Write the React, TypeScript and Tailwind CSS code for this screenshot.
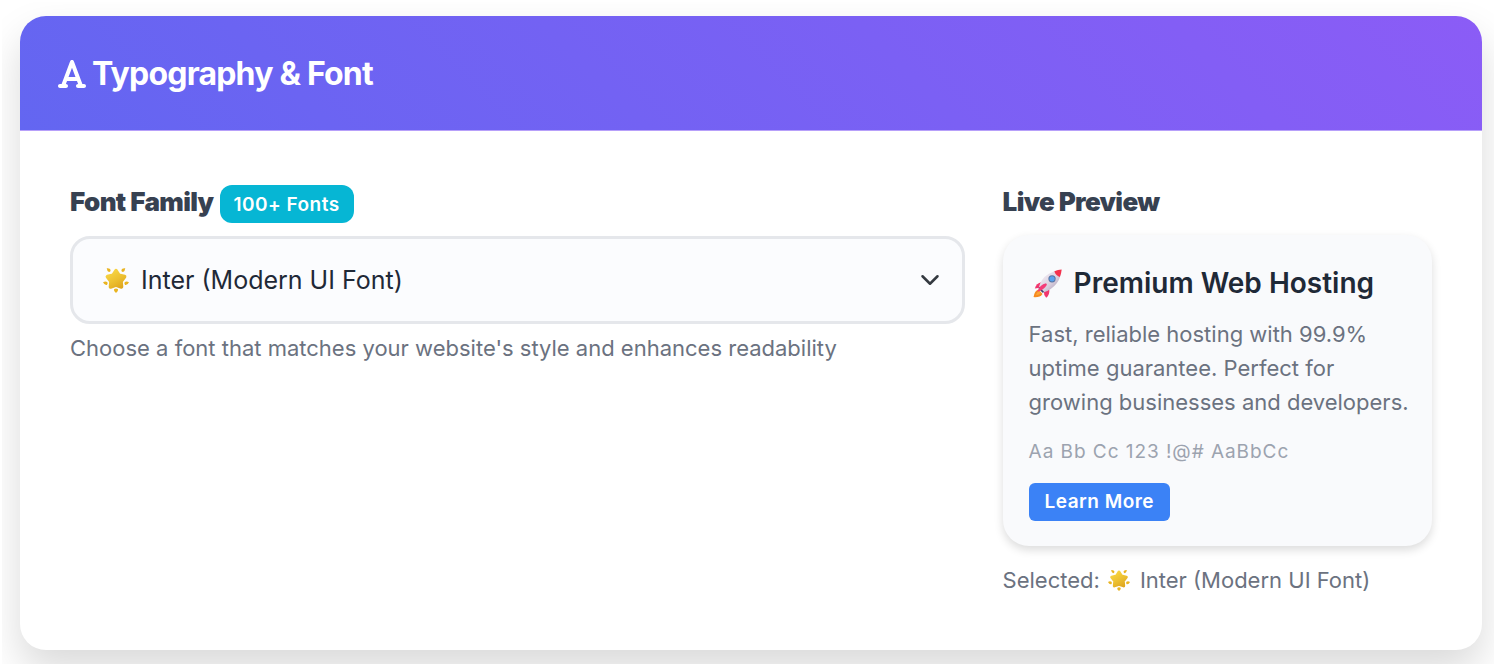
import { useState } from "react";
import { FaFont } from "react-icons/fa6";

const FONTS = ["Inter (Modern UI Font)", "Roboto (Clean Sans)", "Open Sans (Friendly)", "Lato (Humanist)"];

function Star({ className }: { className: string }) {
  return (
    <svg viewBox="0 0 32 32" className={className} aria-hidden="true">
      <defs>
        <linearGradient id="star" x1="0.2" y1="0" x2="0.8" y2="1">
          <stop offset="0" stopColor="#f8d544" />
          <stop offset="0.55" stopColor="#ecc031" />
          <stop offset="1" stopColor="#e0a81f" />
        </linearGradient>
      </defs>
      <path
        d="M16 4.4 L19.6 10.2 L26.6 11.8 L22.2 17.6 L22.8 24.6 L16 22.2 L9.2 24.6 L9.8 17.6 L5.4 11.8 L12.4 10.2 Z"
        fill="url(#star)"
        stroke="url(#star)"
        strokeWidth="4.4"
        strokeLinejoin="round"
      />
      <g fill="#e9b421">
        <path d="M4.6 1.6 Q8.8 1.2 9.4 3.8 Q9.4 6.2 7.4 6.1 Q5 5.6 4.6 1.6Z" />
        <path d="M27.4 1.6 Q23.2 1.2 22.6 3.8 Q22.6 6.2 24.6 6.1 Q27 5.6 27.4 1.6Z" />
        <path d="M0 18.8 Q3 16.8 5.2 18.6 Q6.4 20.5 4.8 22 Q2 22.8 0 18.8Z" />
        <path d="M32 18.8 Q29 16.8 26.8 18.6 Q25.6 20.5 27.2 22 Q30 22.8 32 18.8Z" />
        <path d="M16 32 Q12.8 29.8 13.5 27.5 Q16 25.6 18.5 27.5 Q19.2 29.8 16 32Z" />
      </g>
    </svg>
  );
}

function Rocket({ className }: { className: string }) {
  return (
    <svg viewBox="0 0 32 32" className={className} aria-hidden="true">
      <defs>
        <linearGradient id="hull" x1="0.2" y1="0.2" x2="0.8" y2="0.8">
          <stop offset="0" stopColor="#f0e9f2" />
          <stop offset="0.6" stopColor="#d9cfde" />
          <stop offset="1" stopColor="#b5a8bf" />
        </linearGradient>
      </defs>
      <path d="M6 22.5 Q1.6 24 .6 31 Q8 31.5 10.5 27.5Z" fill="#f68b1f" />
      <path d="M6.5 24 Q4 26 3.4 29 Q7 28.5 9 26.4Z" fill="#fba53a" />
      <path d="M9.5 14.6 Q3.4 15.6 2 21.6 L7.6 20.6Z" fill="#f2356d" />
      <path d="M18 22.6 Q18.6 28.4 14.6 31.8 Q11.6 28.6 12 25Z" fill="#f2356d" />
      <path d="M6.2 21.5 Q8.4 10.5 17 5.4 Q24 1.2 31.2 1 Q30.8 9.6 26.4 15.4 Q20.4 23.4 10.6 26.2Z" fill="url(#hull)" />
      <path d="M23.6 2.4 Q27.6.8 31.6.6 Q31.4 5 29.6 8.8 Q24.8 7 23.6 2.4Z" fill="#f5314c" />
      <path d="M6.2 21.5 L10.6 26.2 L12.4 25.4 L6.8 19.6Z" fill="#47406f" />
      <path d="M14.4 15.8 Q7.6 17 4.6 25.2 Q12 23.4 15.4 17.4Z" fill="#f43c78" />
      <circle cx="21" cy="10.8" r="4" fill="#56729f" />
      <circle cx="21" cy="10.8" r="2.9" fill="#58a2ee" />
    </svg>
  );
}

export default function App() {
  const [font, setFont] = useState(FONTS[0]);

  return (
    <main className="m-0.5 overflow-hidden bg-white pt-3.5 pr-3 pb-3.5 pl-[18px] font-['Inter','Liberation_Sans',sans-serif] text-[#6b7280]">
      <section className="overflow-hidden rounded-[26px] bg-white shadow-[0_20px_40px_rgba(0,0,0,0.15)]">
        <header className="border-b border-[#b7a0fa] bg-[linear-gradient(45deg,#6366f1,#8b5cf6)] bg-origin-border px-[38px] pt-[34px] pb-8">
          <h2 className="flex items-center gap-1.5 text-[32px] leading-[48px] font-bold tracking-tight text-white">
            <FaFont className="h-8 w-7" aria-hidden="true" />
            Typography &amp; Font
          </h2>
        </header>

        <div className="grid grid-cols-[25fr_12fr] items-start gap-[38px] px-[50px] pt-[54px] pb-[53px]">
          <div>
            <div className="flex h-[38px] items-center gap-1.5">
              <label htmlFor="font-family" className="pb-1 text-[26px] leading-8 font-black tracking-tight text-[#374151]">
                Font Family
              </label>
              <span className="rounded-xl bg-[#06b6d4] px-3.5 pt-0.5 text-[19px] leading-9 font-semibold tracking-wide text-white">
                100+ Fonts
              </span>
            </div>
            <div className="relative mt-[13px]">
              <select
                id="font-family"
                value={font}
                onChange={(e) => setFont(e.target.value)}
                className="h-[88px] w-full appearance-none rounded-[20px] border-[3px] border-[#e5e7eb] bg-[#fbfcfe] pt-0.5 pr-16 pl-[68px] text-[25px] text-[#1f2937]"
              >
                {FONTS.map((f) => (
                  <option key={f}>{f}</option>
                ))}
              </select>
              <Star className="pointer-events-none absolute top-[31px] left-[33px] size-[26px]" />
              <svg
                viewBox="0 0 16 16"
                className="pointer-events-none absolute top-[34px] right-[25px] size-5"
                fill="none"
                stroke="#343a40"
                strokeWidth="2"
                strokeLinecap="round"
                strokeLinejoin="round"
                aria-hidden="true"
              >
                <path d="m2 5 6 6 6-6" />
              </svg>
            </div>
            <p className="mt-[7px] text-[22px] leading-[34px]">
              Choose a font that matches your website's style and enhances readability
            </p>
          </div>

          <div>
            <h3 className="h-[38px] text-[26px] leading-[34px] font-black tracking-tight text-[#374151]">Live Preview</h3>
            <article className="mt-3 rounded-[26px] bg-[#f9fafc] pt-[27px] pr-4 pb-[25px] pl-[26px] shadow-[0_4px_10px_rgba(0,0,0,0.14)]">
              <h4 className="flex items-center gap-3 text-[28px] leading-[42px] font-semibold text-[#1f2937]">
                <Rocket className="ml-1 size-[29px]" />
                Premium Web Hosting
              </h4>
              <p className="mt-[13px] text-[22px] leading-[34px]">
                Fast, reliable hosting with 99.9% uptime guarantee. Perfect for growing businesses and developers.
              </p>
              <p className="mt-4 text-[19px] leading-[34px] tracking-wider text-[#9ca3af]">Aa Bb Cc 123 !@# AaBbCc</p>
              <button
                type="button"
                className="mt-3.5 block rounded-md bg-[#3b82f6] px-4 text-[19px] leading-[38px] font-semibold tracking-wide text-white"
              >
                Learn More
              </button>
            </article>
            <p className="mt-[17px] flex items-center text-[22px] leading-[34px]">
              Selected:
              <Star className="mr-2.5 ml-2 size-[22px]" />
              {font}
            </p>
          </div>
        </div>
      </section>
    </main>
  );
}
